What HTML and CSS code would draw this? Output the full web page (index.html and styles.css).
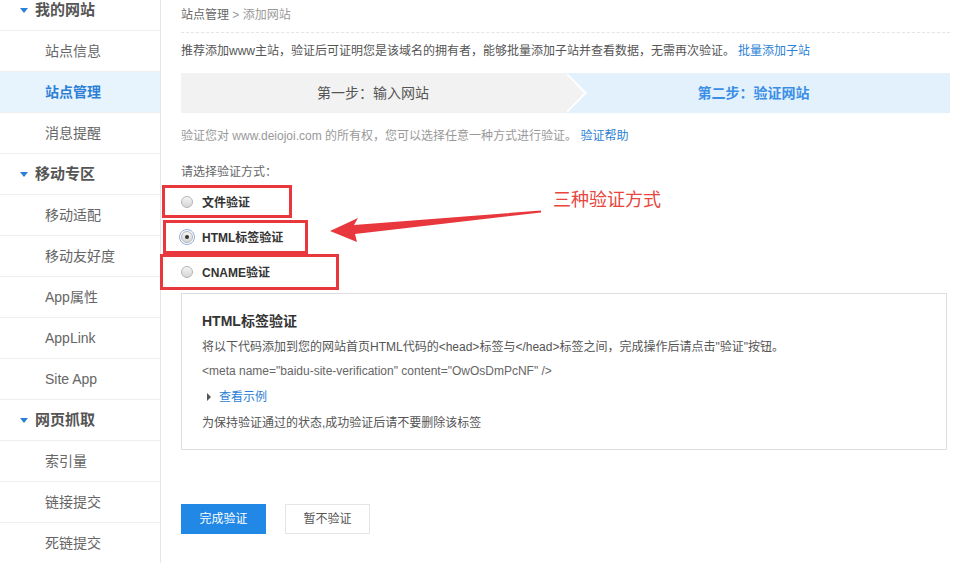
FILE: index.html
```html
<!DOCTYPE html>
<html lang="zh-CN">
<head>
    <meta charset="UTF-8">
    <meta name="viewport" content="width=device-width, initial-scale=1.0">
    <title>添加网站</title>
    <link rel="stylesheet" href="styles.css">
</head>
<body>
    <div class="page">
        <ul class="side">
            <li class="side-head"><i class="tri"></i>我的网站</li>
            <li>站点信息</li>
            <li class="on">站点管理</li>
            <li>消息提醒</li>
            <li class="side-head"><i class="tri"></i>移动专区</li>
            <li>移动适配</li>
            <li>移动友好度</li>
            <li>App属性</li>
            <li>AppLink</li>
            <li>Site App</li>
            <li class="side-head"><i class="tri"></i>网页抓取</li>
            <li>索引量</li>
            <li>链接提交</li>
            <li>死链提交</li>
        </ul>

        <div class="main">
            <div class="crumb"><span class="crumb-up">站点管理</span> &gt; 添加网站</div>
            <p class="intro">推荐添加www主站，验证后可证明您是该域名的拥有者，能够批量添加子站并查看数据，无需再次验证。<a href="#">批量添加子站</a></p>

            <div class="steps">
                <div class="step step-one">第一步：输入网站</div>
                <div class="step step-two">第二步：验证网站</div>
            </div>

            <p class="own">验证您对 www.deiojoi.com 的所有权，您可以选择任意一种方式进行验证。 <a href="#">验证帮助</a></p>
            <p class="choose">请选择验证方式：</p>

            <div class="opts">
                <label class="opt"><span class="radio"></span>文件验证</label>
                <label class="opt"><span class="radio checked"></span>HTML标签验证</label>
                <label class="opt"><span class="radio"></span>CNAME验证</label>
            </div>

            <div class="info">
                <h3>HTML标签验证</h3>
                <p class="info-line">将以下代码添加到您的网站首页HTML代码的&lt;head&gt;标签与&lt;/head&gt;标签之间，完成操作后请点击"验证"按钮。</p>
                <p class="info-line code">&lt;meta name="baidu-site-verification" content="OwOsDmPcNF" /&gt;</p>
                <p class="info-line more"><i class="tri-r"></i><a href="#">查看示例</a></p>
                <p class="info-line">为保持验证通过的状态,成功验证后请不要删除该标签</p>
            </div>

            <div class="btns">
                <a class="btn btn-blue" href="#">完成验证</a>
                <a class="btn" href="#">暂不验证</a>
            </div>
        </div>
    </div>

    <!-- 标注 -->
    <svg class="mark" width="958" height="563" viewBox="0 0 958 563">
        <rect x="163.5" y="186.5" width="127" height="30" fill="none" stroke="#e8373d" stroke-width="3"/>
        <rect x="164.5" y="221.5" width="142" height="31" fill="none" stroke="#e8373d" stroke-width="3"/>
        <rect x="161.5" y="255.5" width="176" height="33" fill="none" stroke="#e8373d" stroke-width="3"/>
        <polygon points="330,231 358,218 354,225 541,210.5 541,212.5 355,234 357,242" fill="#e8373d"/>
    </svg>
    <div class="mark-text">三种验证方式</div>
</body>
</html>
```

FILE: styles.css
```css
* {
    margin: 0;
    padding: 0;
    box-sizing: border-box;
}
body {
    font-family: "Liberation Sans", "Noto Sans CJK SC", sans-serif;
    font-size: 12px;
    color: #555;
    background: #fff;
    width: 958px;
    height: 563px;
    overflow: hidden;
    position: relative;
}
a {
    color: #2b7fd6;
    text-decoration: none;
}
.page {
    display: flex;
    height: 563px;
}

/* 左侧菜单 */
.side {
    list-style: none;
    width: 161px;
    flex: none;
    border-right: 1px solid #e6e6e6;
    margin-top: -10px;
}
.side li {
    height: 41px;
    line-height: 40px;
    border-bottom: 1px solid #eee;
    padding-left: 45px;
    font-size: 14px;
    color: #666;
}
.side .side-head {
    padding-left: 20px;
    font-size: 15px;
    font-weight: bold;
    color: #555;
    display: flex;
    align-items: center;
}
.side .on {
    background: #e8f4fd;
    color: #2b7fd6;
    font-weight: bold;
}
.tri {
    width: 0;
    height: 0;
    border-left: 4px solid transparent;
    border-right: 4px solid transparent;
    border-top: 5px solid #2b7fd6;
    margin-right: 7px;
}

/* 右侧内容 */
.main {
    flex: 1;
    padding: 0 8px 0 20px;
}
.crumb {
    height: 33px;
    line-height: 30px;
    border-bottom: 1px dashed #e5e5e5;
    color: #999;
}
.crumb-up {
    color: #666;
}
.intro {
    margin-top: 8px;
    line-height: 20px;
    color: #555;
}
.intro a {
    margin-left: 3px;
}
.steps {
    display: flex;
    margin-top: 12px;
    height: 40px;
    line-height: 40px;
    font-size: 14px;
}
.step {
    text-align: center;
}
.step-one {
    width: 384px;
    background: #f2f2f2;
    color: #555;
    position: relative;
    z-index: 1;
}
.step-one::before,
.step-one::after {
    content: "";
    position: absolute;
    top: 0;
    width: 0;
    height: 0;
    border-top: 20px solid transparent;
    border-bottom: 20px solid transparent;
}
.step-one::before {
    right: -22px;
    border-left: 20px solid #fff;
}
.step-one::after {
    right: -19px;
    border-left: 19px solid #f2f2f2;
}
.step-two {
    flex: 1;
    background: #e3f1fc;
    color: #3a8ee6;
    font-weight: bold;
    padding-right: 8px;
}
.own {
    margin-top: 13px;
    line-height: 20px;
    color: #999;
}
.choose {
    margin-top: 16px;
    line-height: 20px;
    color: #666;
}
.opts {
    margin-top: 2px;
}
.opt {
    display: flex;
    align-items: center;
    height: 35px;
    font-weight: bold;
    color: #333;
}
.radio {
    width: 12px;
    height: 12px;
    border-radius: 50%;
    border: 1px solid #b5b5b5;
    background: linear-gradient(#f4f4f4, #d6d6d6);
    margin-right: 9px;
    position: relative;
}
.radio.checked {
    outline: 1px solid #8eaee0;
    outline-offset: 1px;
}
.radio.checked::after {
    content: "";
    position: absolute;
    left: 3px;
    top: 3px;
    width: 4px;
    height: 4px;
    border-radius: 50%;
    background: #333;
}

.info {
    margin-top: 4px;
    margin-right: 3px;
    border: 1px solid #ddd;
    height: 157px;
    padding: 16px 20px 0 20px;
}
.info h3 {
    font-size: 14px;
    line-height: 22px;
    color: #333;
}
.info-line {
    line-height: 24px;
    color: #555;
}
.info h3 + .info-line {
    margin-top: 3px;
}
.code {
    color: #666;
}
.more {
    margin-top: 2px;
    display: flex;
    align-items: center;
    padding-left: 5px;
}
.more + .info-line {
    margin-top: 2px;
}
.tri-r {
    width: 0;
    height: 0;
    border-top: 4px solid transparent;
    border-bottom: 4px solid transparent;
    border-left: 4px solid #555;
    margin-right: 8px;
}

.btns {
    margin-top: 54px;
    display: flex;
    gap: 19px;
}
.btn {
    display: block;
    width: 85px;
    height: 30px;
    line-height: 28px;
    text-align: center;
    border: 1px solid #e5e5e5;
    color: #555;
    background: #fff;
}
.btn-blue {
    background: #2288e6;
    border-color: #2288e6;
    color: #fff;
}

/* 标注层 */
.mark {
    position: absolute;
    left: 0;
    top: 0;
    pointer-events: none;
}
.mark-text {
    position: absolute;
    left: 553px;
    top: 188px;
    font-size: 18px;
    line-height: 24px;
    color: #e8453c;
}
```
